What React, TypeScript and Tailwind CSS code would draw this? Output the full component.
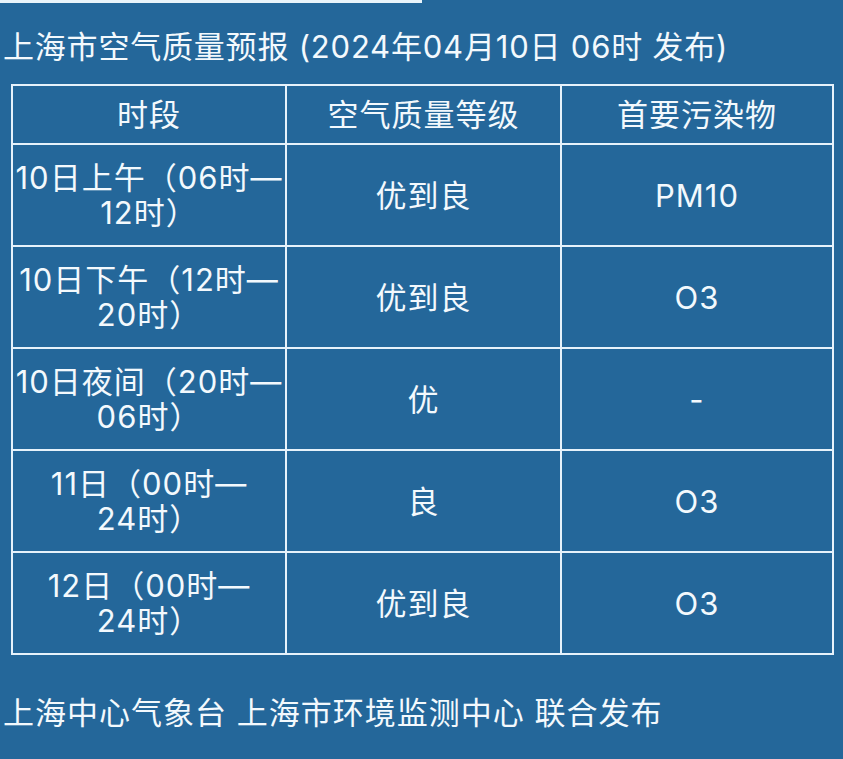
const FONT = "font-['Inter','Noto_Sans_CJK_SC',sans-serif]";

const ROWS: { period: [string, string]; level: string; pollutant: string }[] = [
  { period: ["10日上午（06时—", "12时）"], level: "优到良", pollutant: "PM10" },
  { period: ["10日下午（12时—", "20时）"], level: "优到良", pollutant: "O3" },
  { period: ["10日夜间（20时—", "06时）"], level: "优", pollutant: "-" },
  { period: ["11日（00时—", "24时）"], level: "良", pollutant: "O3" },
  { period: ["12日（00时—", "24时）"], level: "优到良", pollutant: "O3" },
];

export default function App() {
  return (
    <div className={`min-h-screen w-full bg-[#24679a] text-[#f3f9fd] ${FONT}`}>
      <div className="h-[3px] w-[422px] bg-[#e9f4fb]" />

      <h1 className="mt-[24px] pl-[3px] text-[31px] leading-[40px] font-normal tracking-[0.8px] whitespace-nowrap">
        上海市空气质量预报 (2024年04月10日 06时 发布)
      </h1>

      <table className="mt-[17px] ml-[11px] w-[823px] table-fixed border-collapse">
        <thead>
          <tr className="h-[59px]">
            <th className="w-[274px] border-2 border-[#e6f2fb] text-[31px] font-normal leading-[35px] tracking-[1px]">时段</th>
            <th className="w-[275px] border-2 border-[#e6f2fb] text-[31px] font-normal leading-[35px] tracking-[1px]">空气质量等级</th>
            <th className="border-2 border-[#e6f2fb] text-[31px] font-normal leading-[35px] tracking-[1px]">首要污染物</th>
          </tr>
        </thead>
        <tbody>
          {ROWS.map((r) => (
            <tr key={r.period[0]} className="h-[102px]">
              <td className="border-2 border-[#e6f2fb] text-center text-[31px] leading-[35px] tracking-[1px]">
                <div className="whitespace-nowrap">{r.period[0]}</div>
                <div>{r.period[1]}</div>
              </td>
              <td className="border-2 border-[#e6f2fb] text-center text-[31px] leading-[35px] tracking-[1px]">{r.level}</td>
              <td className="border-2 border-[#e6f2fb] text-center text-[31px] leading-[35px] tracking-[1px]">{r.pollutant}</td>
            </tr>
          ))}
        </tbody>
      </table>

      <p className="mt-[38px] pl-[3px] text-[31px] leading-[40px] tracking-[1px] whitespace-nowrap">
        上海中心气象台 上海市环境监测中心 联合发布
      </p>
    </div>
  );
}
